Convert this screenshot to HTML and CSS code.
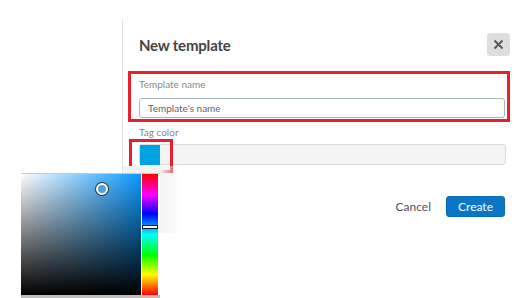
FILE: index.html
```html
<!DOCTYPE html>
<html lang="en">
<head>
  <meta charset="UTF-8" />
  <title>New template</title>
  <link rel="stylesheet" href="styles.css">
</head>
<body>

  <div class="panel">
    <div class="panel-header">
      <h2>New template</h2>
      <button class="close-btn" aria-label="Close">
        <svg width="11" height="11" viewBox="0 0 11 11">
          <path d="M1.5 1.5 L9.5 9.5 M9.5 1.5 L1.5 9.5" stroke="#555" stroke-width="1.8"/>
        </svg>
      </button>
    </div>

    <div class="field highlight">
      <label for="templateName">Template name</label>
      <input type="text" id="templateName" value="Template's name">
    </div>

    <div class="field tag-field">
      <label>Tag color</label>
      <div class="color-input">
        <span class="swatch"></span>
      </div>
    </div>

    <div class="actions">
      <button class="cancel-btn">Cancel</button>
      <button class="create-btn">Create</button>
    </div>
  </div>

  <!-- color picker popup -->
  <div class="picker-shadow"></div>
  <div class="picker">
    <div class="sv-area">
      <span class="sv-handle"></span>
    </div>
    <div class="hue-bar">
      <span class="hue-handle"></span>
    </div>
  </div>

</body>
</html>
```

FILE: styles.css
```css
* {
  margin: 0;
  padding: 0;
  box-sizing: border-box;
  font-family: 'Lato', 'Liberation Sans', sans-serif;
}

body {
  background-color: white;
  width: 514px;
  height: 298px;
  overflow: hidden;
  position: relative;
}

.panel {
  margin: 20px 0 0 122px;
  height: 278px;
  border-left: 1px solid #e2e2e2;
  padding: 13px 4px 0 5px;
}

.panel-header {
  display: flex;
  justify-content: space-between;
  align-items: center;
  padding-left: 11px;
  height: 23px;
}

.panel-header h2 {
  font-size: 15px;
  font-weight: bold;
  color: #444;
  letter-spacing: -0.2px;
}

.close-btn {
  width: 23px;
  height: 23px;
  background-color: #dedede;
  border: none;
  border-radius: 3px;
  display: flex;
  align-items: center;
  justify-content: center;
  cursor: pointer;
}

.field label {
  display: block;
  font-size: 10px;
  line-height: 12px;
  color: #7f8c8d;
}

.highlight {
  margin-top: 15px;
  height: 51px;
  border: 3px solid #e8202a;
  padding: 4px 0 0 8px;
}

.highlight input {
  display: block;
  margin-top: 8px;
  width: 366px;
  height: 20px;
  border: 1px solid #a9b6b9;
  border-radius: 3px;
  padding: 0 8px;
  font-size: 10px;
  color: #666;
  outline: none;
}

.tag-field {
  margin-top: 4px;
  padding-left: 11px;
}

.color-input {
  position: relative;
  margin-top: 6px;
  width: 367px;
  height: 21px;
  background-color: #f4f4f4;
  border: 1px solid #dcdcdc;
  border-radius: 3px;
}

.swatch {
  display: block;
  width: 20px;
  height: 20px;
  background-color: #00a3e2;
}

.swatch::after {
  content: "";
  position: absolute;
  box-sizing: border-box;
  left: -11px;
  top: -6px;
  width: 44px;
  height: 34px;
  border: 3px solid #e8202a;
}

.actions {
  display: flex;
  justify-content: flex-end;
  align-items: center;
  gap: 15px;
  margin-top: 31px;
  padding-right: 5px;
}

.cancel-btn {
  background: none;
  border: none;
  font-size: 12px;
  color: #555;
  cursor: pointer;
}

.create-btn {
  width: 59px;
  height: 21px;
  background-color: #0b76c6;
  border: 1px solid #0a6bb5;
  border-radius: 3px;
  color: white;
  font-size: 12px;
  cursor: pointer;
}

.picker-shadow {
  position: absolute;
  left: 123px;
  top: 166px;
  width: 57px;
  height: 67px;
  background: linear-gradient(to right, #f3f3f3 65%, rgba(255, 255, 255, 0));
}

.picker {
  position: absolute;
  left: 21px;
  top: 173px;
  width: 139px;
  height: 125px;
  display: flex;
  gap: 1px;
  padding-right: 2px;
  background-color: white;
  border-top: 1px solid #c8c8c8;
  border-bottom: 3px solid #bdbdbd;
}

.sv-area {
  position: relative;
  width: 120px;
  background:
    linear-gradient(to top, #000, rgba(0, 0, 0, 0)),
    linear-gradient(to right, #fff, hsl(205, 100%, 52%));
}

.sv-handle {
  position: absolute;
  left: 75px;
  top: 9px;
  width: 12px;
  height: 12px;
  border-radius: 50%;
  background-color: #4aa3e0;
  border: 2px solid white;
  box-shadow: 0 0 0 1px #333;
}

.hue-bar {
  position: relative;
  width: 16px;
  background: linear-gradient(to bottom, #f00 0%, #f0f 17%, #00f 33%, #0ff 50%, #0f0 67%, #ff0 83%, #f00 100%);
}

.hue-handle {
  position: absolute;
  left: 0;
  right: 0;
  top: 51px;
  height: 4px;
  background-color: white;
  border: 1px solid #111;
}
```
